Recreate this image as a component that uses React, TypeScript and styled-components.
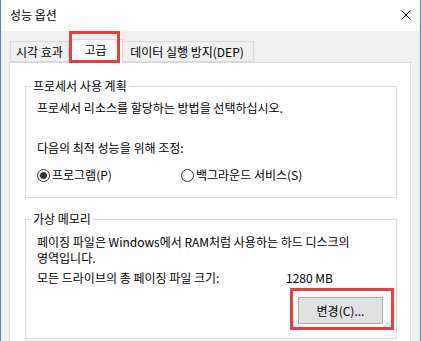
import styled, { createGlobalStyle } from "styled-components";

const GlobalStyle = createGlobalStyle`
  html, body {
    margin: 0;
    padding: 0;
    background: #ffffff;
  }
  body {
    font-family: "Noto Sans CJK KR", "Liberation Sans", sans-serif;
    font-size: 12px;
    color: #000000;
  }
`;

const Window = styled.div`
  width: 421px;
  height: 341px;
  box-sizing: border-box;
  border-left: 1px solid #5a80c8;
  border-right: 1px solid #5a80c8;
  display: flex;
  flex-direction: column;
  overflow: hidden;
  position: relative;
`;

const TitleBar = styled.div`
  height: 31px;
  flex: none;
  background: #ffffff;
  display: flex;
  align-items: center;
  justify-content: space-between;
  padding: 0 9px 1px 9px;
  box-sizing: border-box;
  font-size: 12px;
  line-height: 16px;
`;

const CloseIcon = () => (
  <svg width="10" height="10" viewBox="0 0 10 10">
    <path d="M0.5 0.5 L9.5 9.5 M9.5 0.5 L0.5 9.5" stroke="#111" strokeWidth="1" />
  </svg>
);

const Body = styled.div`
  flex: 1;
  background: #f0f0f0;
  padding: 7px 9px 0 8px;
  display: flex;
  flex-direction: column;
`;

const TabStrip = styled.div`
  display: flex;
  align-items: flex-end;
  height: 24px;
  padding-left: 1px;
  position: relative;
  z-index: 2;
`;

const Tab = styled.div<{ $width: number; $active?: boolean }>`
  position: relative;
  box-sizing: border-box;
  width: ${({ $width }) => $width}px;
  height: ${({ $active }) => ($active ? 24 : 21)}px;
  margin: ${({ $active }) => ($active ? "0 -2px -1px -2px" : "0")};
  z-index: ${({ $active }) => ($active ? 2 : 1)};
  border: 1px solid #d9d9d9;
  border-bottom: ${({ $active }) => ($active ? "none" : "1px solid #d9d9d9")};
  background: ${({ $active }) => ($active ? "#ffffff" : "#f0f0f0")};
  display: flex;
  align-items: center;
  justify-content: center;
  padding-bottom: ${({ $active }) => ($active ? 3 : 0)}px;
  line-height: 16px;
  white-space: nowrap;
  & + & {
    margin-left: ${({ $active }) => ($active ? -2 : -1)}px;
  }
`;

const Highlight = styled.div<{ $t: number; $r: number; $b: number; $l: number }>`
  position: absolute;
  top: ${({ $t }) => $t}px;
  right: ${({ $r }) => $r}px;
  bottom: ${({ $b }) => $b}px;
  left: ${({ $l }) => $l}px;
  border: 3px solid #ef3b3b;
  pointer-events: none;
  z-index: 5;
`;

const Panel = styled.div`
  flex: 1;
  background: #ffffff;
  border: 1px solid #d9d9d9;
  border-bottom: none;
  padding: 0 13px 0 15px;
  display: flex;
  flex-direction: column;
  position: relative;
  z-index: 1;
`;

const Group = styled.fieldset<{ $top: number; $padTop: number }>`
  margin: ${({ $top }) => $top}px 0 0 0;
  padding: ${({ $padTop }) => $padTop}px 13px 14px 11px;
  border: 1px solid #dcdcdc;
  min-width: 0;
  display: flex;
  flex-direction: column;
  line-height: 16px;
`;

const Legend = styled.legend`
  padding: 0 2px;
  margin-left: -6px;
  line-height: 16px;
`;

const Line = styled.div<{ $gap?: number }>`
  margin-top: ${({ $gap }) => $gap ?? 0}px;
  white-space: nowrap;
`;

const RadioRow = styled.div`
  display: flex;
  margin-top: 11px;
`;

const RadioOption = styled.label<{ $width?: number }>`
  display: flex;
  align-items: center;
  gap: 2px;
  width: ${({ $width }) => ($width ? `${$width}px` : "auto")};
`;

const RadioCircle = styled.span<{ $checked?: boolean }>`
  width: 13px;
  height: 13px;
  box-sizing: border-box;
  border: 1px solid #333333;
  border-radius: 50%;
  display: flex;
  align-items: center;
  justify-content: center;
  background: #ffffff;
  &::after {
    content: "";
    width: 7px;
    height: 7px;
    border-radius: 50%;
    background: ${({ $checked }) => ($checked ? "#333333" : "transparent")};
  }
`;

const SizeRow = styled.div`
  display: flex;
  margin-top: 4px;
  white-space: nowrap;
`;

const SizeLabel = styled.span`
  width: 249px;
`;

const ButtonRow = styled.div`
  display: flex;
  justify-content: flex-end;
  margin-top: 11px;
`;

const Button = styled.button`
  position: relative;
  width: 85px;
  height: 27px;
  background: #e1e1e1;
  border: 1px solid #adadad;
  font-family: inherit;
  font-size: 12px;
  color: #000;
  line-height: 16px;
  padding: 0;
`;

export default function App() {
  return (
    <>
      <GlobalStyle />
      <Window>
        <TitleBar>
          <span>성능 옵션</span>
          <CloseIcon />
        </TitleBar>
        <Body>
          <TabStrip>
            <Tab $width={59}>시각 효과</Tab>
            <Tab $width={55} $active>
              고급
              <Highlight $t={-9} $r={2} $b={0} $l={0} />
            </Tab>
            <Tab $width={134}>데이터 실행 방지(DEP)</Tab>
          </TabStrip>
          <Panel>
            <Group $top={15} $padTop={6}>
              <Legend>프로세서 사용 계획</Legend>
              <Line>프로세서 리소스를 할당하는 방법을 선택하십시오.</Line>
              <Line $gap={24}>다음의 최적 성능을 위해 조정:</Line>
              <RadioRow>
                <RadioOption $width={144}>
                  <RadioCircle $checked />
                  프로그램(P)
                </RadioOption>
                <RadioOption>
                  <RadioCircle />
                  백그라운드 서비스(S)
                </RadioOption>
              </RadioRow>
            </Group>
            <Group $top={13} $padTop={7}>
              <Legend>가상 메모리</Legend>
              <Line>페이징 파일은 Windows에서 RAM처럼 사용하는 하드 디스크의</Line>
              <Line>영역입니다.</Line>
              <SizeRow>
                <SizeLabel>모든 드라이브의 총 페이징 파일 크기:</SizeLabel>
                <span>1280 MB</span>
              </SizeRow>
              <ButtonRow>
                <Button>
                  변경(C)...
                  <Highlight $t={-10} $r={-12} $b={-7} $l={-9} />
                </Button>
              </ButtonRow>
            </Group>
          </Panel>
        </Body>
      </Window>
    </>
  );
}
